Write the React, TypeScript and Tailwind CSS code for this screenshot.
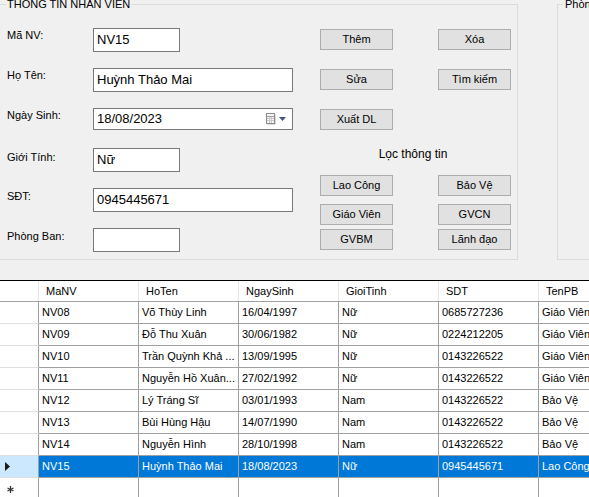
import React from "react";

const rows = [
  ["NV08", "Võ Thùy Linh", "16/04/1997", "Nữ", "0685727236", "Giáo Viên"],
  ["NV09", "Đỗ Thu Xuân", "30/06/1982", "Nữ", "0224212205", "Giáo Viên"],
  ["NV10", "Trần Quỳnh Khả ...", "13/09/1995", "Nữ", "0143226522", "Giáo Viên"],
  ["NV11", "Nguyễn Hồ Xuân...", "27/02/1992", "Nữ", "0143226522", "Giáo Viên"],
  ["NV12", "Lý Tráng Sĩ", "03/01/1993", "Nam", "0143226522", "Bảo Vệ"],
  ["NV13", "Bùi Hùng Hậu", "14/07/1990", "Nam", "0143226522", "Bảo Vệ"],
  ["NV14", "Nguyễn Hình", "28/10/1998", "Nam", "0143226522", "Bảo Vệ"],
  ["NV15", "Huỳnh Thảo Mai", "18/08/2023", "Nữ", "0945445671", "Lao Công"],
];

const headers = ["MaNV", "HoTen", "NgaySinh", "GioiTinh", "SDT", "TenPB"];

const WinButton = ({ label }: { label: string }) => (
  <div className="h-[21px] w-[73px] border border-[#adadad] bg-[#e1e1e1] text-center leading-[19px]">
    {label}
  </div>
);

const Field = ({ label, labelPad, wide, value }: { label: string; labelPad: string; wide?: boolean; value: string }) => (
  <div className="flex h-[24px]">
    <div className={`w-[86px] leading-[13px] ${labelPad}`}>{label}</div>
    <div
      className={`h-[24px] border border-[#7a7a7a] bg-white px-[3px] text-[13px] leading-[22px] ${
        wide ? "w-[200px]" : "w-[87px]"
      }`}
    >
      {value}
    </div>
  </div>
);

const CalendarIcon = () => (
  <svg width="10" height="12" viewBox="0 0 10 12">
    <rect x="1.5" y="1.5" width="8" height="10" fill="#b8b8b8" />
    <rect x="0.5" y="0.5" width="8" height="10" fill="#f6f6f6" stroke="#8c8c8c" />
    <line x1="1" y1="3.5" x2="8" y2="3.5" stroke="#a0a0a0" />
    <line x1="1" y1="5.5" x2="8" y2="5.5" stroke="#c8c8c8" />
    <line x1="1" y1="7.5" x2="8" y2="7.5" stroke="#c8c8c8" />
    <line x1="3.5" y1="4" x2="3.5" y2="10" stroke="#c8c8c8" />
    <line x1="5.5" y1="4" x2="5.5" y2="10" stroke="#c8c8c8" />
  </svg>
);

export default function App() {
  return (
    <div className="relative h-[497px] w-[589px] overflow-hidden bg-[#f0f0f0] font-['Liberation_Sans',Arial,sans-serif] text-[11px] text-black">
      <div className="flex h-[280px]">
        {/* THÔNG TIN NHÂN VIÊN */}
        <div className="relative ml-[-4px] mt-[4px] h-[256px] w-[522px] shrink-0 border border-[#dcdcdc]">
          <span className="absolute -top-[7px] left-[9px] bg-[#f0f0f0] px-[1px] leading-[13px]">
            THÔNG TIN NHÂN VIÊN
          </span>
          <div className="flex pl-[10px] pt-[23px]">
            <div className="flex flex-col gap-[16px]">
              <Field label="Mã NV:" labelPad="pt-[1px]" value="NV15" />
              <Field label="Họ Tên:" labelPad="pt-[1px]" wide value="Huỳnh Thảo Mai" />
              <div className="flex h-[24px]">
                <div className="w-[86px] pt-[1px] leading-[13px]">Ngày Sinh:</div>
                <div className="flex h-[22px] w-[200px] items-center justify-between border border-[#7a7a7a] bg-white pl-[3px] pr-[6px] text-[13px]">
                  <span>18/08/2023</span>
                  <div className="flex items-center gap-[3px]">
                    <CalendarIcon />
                    <svg width="7" height="4" viewBox="0 0 7 4">
                      <polygon points="0,0 7,0 3.5,4" fill="#44587e" />
                    </svg>
                  </div>
                </div>
              </div>
              <Field label="Giới Tính:" labelPad="pt-[3px]" value="Nữ" />
              <Field label="SĐT:" labelPad="pt-[2px]" wide value="0945445671" />
              <Field label="Phòng Ban:" labelPad="pt-[2px]" value="" />
            </div>

            <div className="ml-[27px] mt-[1px] flex w-[191px] flex-col">
              <div className="flex justify-between">
                <WinButton label="Thêm" />
                <WinButton label="Xóa" />
              </div>
              <div className="mt-[19px] flex justify-between">
                <WinButton label="Sửa" />
                <WinButton label="Tìm kiếm" />
              </div>
              <div className="mt-[19px] flex">
                <WinButton label="Xuất DL" />
              </div>
              <div className="mt-[17px] pr-[5px] text-center text-[12px] leading-[14px]">Lọc thông tin</div>
              <div className="mt-[14px] flex justify-between">
                <WinButton label="Lao Công" />
                <WinButton label="Bảo Vệ" />
              </div>
              <div className="mt-[8px] flex justify-between">
                <WinButton label="Giáo Viên" />
                <WinButton label="GVCN" />
              </div>
              <div className="mt-[4px] flex justify-between">
                <WinButton label="GVBM" />
                <WinButton label="Lãnh đạo" />
              </div>
            </div>
          </div>
        </div>

        {/* Phòng Ban */}
        <div className="relative ml-[39px] mt-[4px] h-[256px] w-[80px] shrink-0 border border-[#dcdcdc]">
          <span className="absolute -top-[7px] left-[5px] whitespace-nowrap bg-[#f0f0f0] px-[2px] leading-[13px]">
            Phòng Ban
          </span>
        </div>
      </div>

      {/* grid */}
      <div className="border-t border-black bg-white">
        <div className="flex h-[21px] border-b border-[#a0a0a0] leading-[20px]">
          <div className="w-[39px] shrink-0 border-r border-[#e5e5e5]" />
          {headers.map((h) => (
            <div key={h} className="w-[100px] shrink-0 border-r border-[#e5e5e5] pl-[7px]">
              {h}
            </div>
          ))}
        </div>
        {rows.map((r, i) => {
          const selected = i === rows.length - 1;
          return (
            <div key={r[0]} className="flex h-[22px] leading-[21px]">
              <div
                className={`flex w-[39px] shrink-0 items-center border-b border-r border-b-[#e0e0e0] border-r-[#a0a0a0] pl-[5px] ${
                  selected ? "bg-[#cce8ff]" : ""
                }`}
              >
                {selected && (
                  <svg width="5" height="9" viewBox="0 0 5 9">
                    <polygon points="0,0 5,4.5 0,9" fill="#1a1a1a" />
                  </svg>
                )}
              </div>
              {r.map((c, j) => (
                <div
                  key={j}
                  className={`w-[100px] shrink-0 overflow-hidden whitespace-nowrap border-b border-r border-[#a0a0a0] pl-[3px] ${
                    selected ? "bg-[#0078d7] text-white" : ""
                  }`}
                >
                  {c}
                </div>
              ))}
            </div>
          );
        })}
        <div className="flex h-[22px]">
          <div className="flex w-[39px] shrink-0 items-center border-r border-[#a0a0a0] pl-[7px]">
            <svg width="7" height="7" viewBox="0 0 7 7">
              <g stroke="#333" strokeWidth="1.3">
                <line x1="3.5" y1="0" x2="3.5" y2="7" />
                <line x1="0.5" y1="2" x2="6.5" y2="5" />
                <line x1="0.5" y1="5" x2="6.5" y2="2" />
              </g>
            </svg>
          </div>
          {headers.map((h) => (
            <div key={h} className="w-[100px] shrink-0 border-r border-[#a0a0a0]" />
          ))}
        </div>
      </div>
    </div>
  );
}
